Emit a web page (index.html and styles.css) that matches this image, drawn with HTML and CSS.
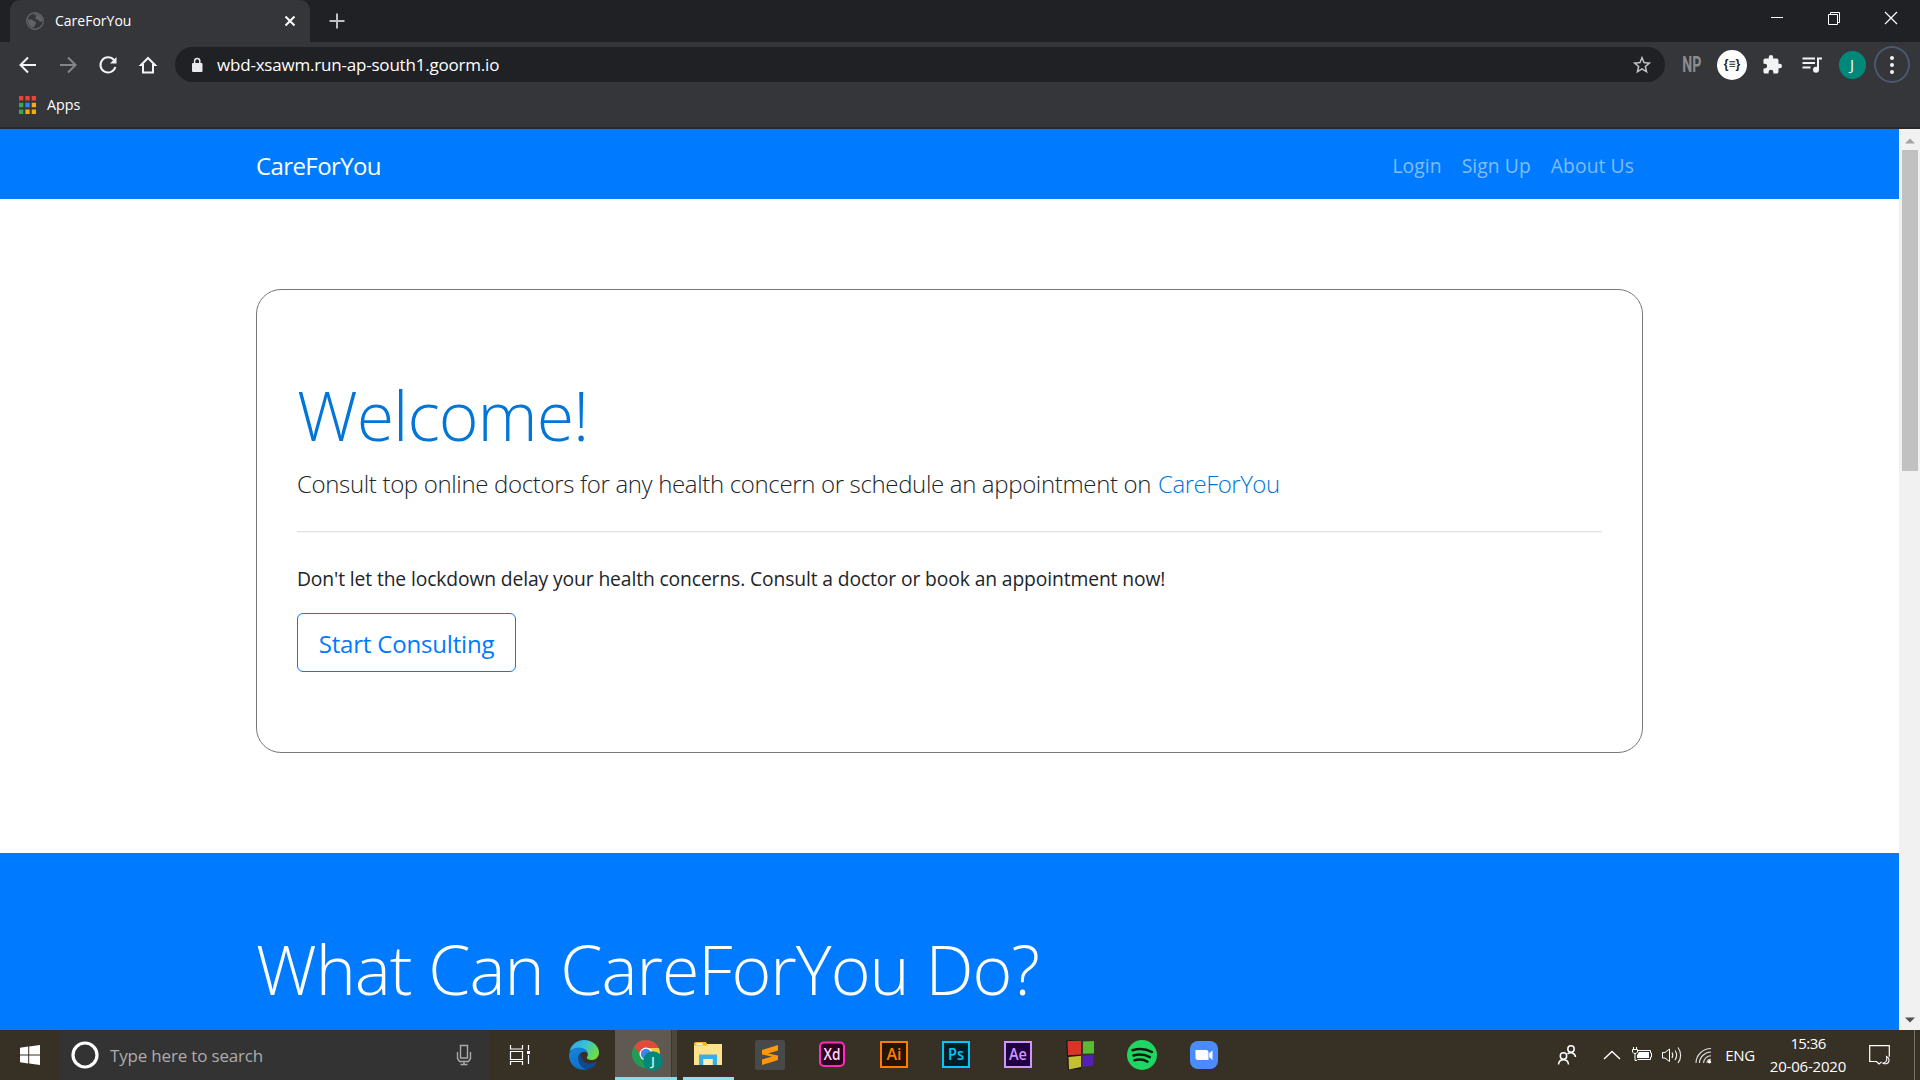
FILE: index.html
```html
<!DOCTYPE html>
<html lang="en">
<head>
<meta charset="utf-8">
<title>CareForYou</title>
<link rel="stylesheet" href="styles.css">
</head>
<body>
<header class="tabstrip">
  <div class="tab">
    <svg width="18" height="18" viewBox="0 0 18 18"><circle cx="9" cy="9" r="8.300" fill="#35363a" stroke="#5f6368" stroke-width="1.400"/><path d="M2 7.500c2.500-.5 4 0 5 1s2.500.8 3 1.800c.5 1.200-1 1.700-1 3 0 1.700-1.500 2.200-2.500 2.200C3.500 14.500 1.500 11 2 7.500zM7 2c3-.9 6 .2 7.500 2 1.200 1.400 2 3 1.800 5-1-.2-1.300 1-2.300.8-1.200-.2-.8-2-2-2.200-1.500-.2-2.500-.4-2.700-1.600-.2-1.300 1.200-1.200 1.200-2.200C10.500 2.800 8 3.500 7 2z" fill="#5f6368"/></svg>
    <span class="tab-title">CareForYou</span>
    <svg width="12" height="12" viewBox="0 0 12 12"><path d="M1.500 1.500l9 9M10.500 1.500l-9 9" stroke="#fff" stroke-width="2"/></svg>
  </div>
  <svg class="new-tab" width="16" height="16" viewBox="0 0 16 16"><path d="M8 .5v15M.5 8h15" stroke="#bdc1c6" stroke-width="2"/></svg>
  <div class="window-buttons">
    <svg width="14" height="14" viewBox="0 0 14 14"><path d="M1 6.500h12" stroke="#fff"/></svg>
    <svg width="14" height="14" viewBox="0 0 14 14"><path d="M1.500 3.500h9v10h-9zM3.500 3.500v-2h9v10h-2" fill="none" stroke="#fff"/></svg>
    <svg width="14" height="14" viewBox="0 0 14 14"><path d="M1 1l12 12M13 1L1 13" stroke="#fff" stroke-width="1.200"/></svg>
  </div>
</header>
<div class="toolbar">
  <div class="nav-buttons">
    <svg width="20" height="20" viewBox="0 0 20 20"><path d="M18 10H3M10 2.500L2.500 10l7.500 7.500" fill="none" stroke="#f1f3f4" stroke-width="2"/></svg>
    <svg width="20" height="20" viewBox="0 0 20 20"><path d="M2 10h15M10 2.500l7.500 7.500-7.500 7.500" fill="none" stroke="#85868a" stroke-width="2"/></svg>
    <svg width="20" height="20" viewBox="0 0 20 20"><path d="M16 5.200A7.600 7.600 0 1 0 17.400 12" fill="none" stroke="#f1f3f4" stroke-width="2"/><path d="M18.500 2v6.500H12z" fill="#f1f3f4"/></svg>
    <svg width="20" height="20" viewBox="0 0 20 20"><path d="M10 3L3 10h2v7.500h10V10h2z" fill="none" stroke="#f1f3f4" stroke-width="2"/></svg>
  </div>
  <div class="omnibox">
    <svg width="12" height="16" viewBox="0 0 12 16"><rect x="1" y="6" width="10.500" height="9" rx="1" fill="#e8eaed"/><path d="M3.600 7V4a2.600 2.600 0 0 1 5.200 0v3" fill="none" stroke="#e8eaed" stroke-width="1.500"/></svg>
    <span class="url">wbd-xsawm.run-ap-south1.goorm.io</span>
    <svg class="star" width="22" height="22" viewBox="0 0 24 24"><path fill="#c4c7ca" d="M22 9.240l-7.190-.620L12 2 9.190 8.630 2 9.240l5.460 4.730L5.820 21 12 17.270 18.180 21l-1.630-7.030L22 9.240zM12 15.400l-3.760 2.270 1-4.280-3.320-2.880 4.380-.380L12 6.100l1.710 4.040 4.380.380-3.320 2.880 1 4.280L12 15.400z"/></svg>
  </div>
  <div class="extensions">
    <div class="ext"><span class="ext-np">NP</span></div>
    <div class="ext"><span class="ext-json">{≡}</span></div>
    <div class="ext"><svg width="19" height="19" viewBox="1.500 1 21.500 21.500"><path fill="#f1f3f4" d="M20.500 11H19V7c0-1.100-.9-2-2-2h-4V3.500a2.500 2.500 0 0 0-5 0V5H4c-1.100 0-1.990.9-1.990 2v3.800H3.500a2.700 2.700 0 0 1 0 5.400H2V20c0 1.100.9 2 2 2h3.800v-1.500a2.700 2.700 0 0 1 5.400 0V22H17c1.100 0 2-.9 2-2v-4h1.500a2.500 2.500 0 0 0 0-5z"/></svg></div>
    <div class="ext"><svg width="20" height="18" viewBox="0 0 20 18"><path d="M.5 2.500h12.500M.5 7h12.500M.5 11.500h8" stroke="#f1f3f4" stroke-width="2"/><path d="M16 13.500V2.500h4" fill="none" stroke="#f1f3f4" stroke-width="2"/><circle cx="14" cy="13.800" r="3" fill="#f1f3f4"/></svg></div>
    <div class="ext"><span class="avatar">J</span></div>
    <div class="ext"><span class="menu"><i></i><i></i><i></i></span></div>
  </div>
</div>
<div class="bookmarks">
  <svg width="17" height="18" viewBox="0 0 17 18"><path fill="#ea4335" d="M0 0h4.300v4.500H0zM6.350 0h4.300v4.500h-4.300zM12.700 0H17v4.500h-4.300z"/><path fill="#34a853" d="M0 6.750h4.300v4.500H0zM0 13.500h4.300V18H0z"/><path fill="#2a8af4" d="M6.350 6.750h4.300v4.500h-4.300z"/><path fill="#fbab05" d="M12.700 6.750H17v4.500h-4.300zM6.350 13.500h4.300V18h-4.300zM12.700 13.500H17V18h-4.300z"/></svg>
  <span>Apps</span>
</div>
<div class="viewport">
  <main class="page">
    <nav class="navbar">
      <span class="brand">CareForYou</span>
      <div class="links"><span>Login</span><span>Sign Up</span><span>About Us</span></div>
    </nav>
    <section class="welcome-card">
      <h1>Welcome!</h1>
      <p class="lead">Consult top online doctors for any health concern or schedule an appointment on <span class="name">CareForYou</span></p>
      <hr>
      <p class="note">Don't let the lockdown delay your health concerns. Consult a doctor or book an appointment now!</p>
      <button class="start">Start Consulting</button>
    </section>
    <section class="features"><h2>What Can CareForYou Do?</h2></section>
  </main>
  <div class="scrollbar">
    <svg width="10" height="6" viewBox="0 0 10 6"><path d="M0 5.500L5 .5l5 5z" fill="#a3a3a3"/></svg>
    <div class="thumb"></div>
    <svg class="down" width="10" height="6" viewBox="0 0 10 6"><path d="M0 .5l5 5 5-5z" fill="#505050"/></svg>
  </div>
</div>
<footer class="taskbar">
  <div class="start-menu"><svg width="20" height="20" viewBox="0 0 20 20"><path fill="#fff" d="M0 2.700l8.200-1.100v7.900H0zM9.200 1.400L20 0v9.500H9.200zM0 10.500h8.200v7.900L0 17.300zM9.200 10.500H20V20L9.200 18.600z"/></svg></div>
  <div class="search">
    <svg width="28" height="28" viewBox="0 0 28 28"><circle cx="14" cy="14" r="12" fill="none" stroke="#fff" stroke-width="3.200"/></svg>
    <span>Type here to search</span>
    <svg class="mic" width="16" height="22" viewBox="0 0 16 22"><path d="M4.500 1.500h7v12.500h-7zM1.500 8v6.500l2 3h9l2-3V8M8 17.500V20M4.500 20.500h7" fill="none" stroke="#aaa" stroke-width="1.400"/></svg>
  </div>
  <div class="app task-view"><svg width="22" height="22" viewBox="0 0 22 22"><path d="M1.500 1v4h12V1M1.500 7.500h12v8h-12zM1.500 21v-3.500h12V21M19.500 1v5M19.500 11v9" fill="none" stroke="#fff" stroke-width="1.200"/><path d="M18 7h3v3h-3z" fill="#fff"/></svg></div>
  <div class="app"><svg width="30" height="30" viewBox="0 0 30 30">
    <defs>
      <linearGradient id="edge-top" x1="0" y1="0" x2="1" y2=".5"><stop offset="0" stop-color="#2aa5dc"/><stop offset=".5" stop-color="#35c1dc"/><stop offset="1" stop-color="#6fdc44"/></linearGradient>
      <linearGradient id="edge-left" x1="0" y1="0" x2=".6" y2="1"><stop offset="0" stop-color="#1a86d8"/><stop offset="1" stop-color="#0b6fd0"/></linearGradient>
    </defs>
    <path d="M.5 12C1.500 5 7.500 0 15 0c8.500 0 15 6 15 12.500 0 5-3.800 7.500-7.500 7.500-3 0-4.700-1-4.700-2.200 0-.9 1-1.300 1-3.300C18.800 10.500 15 8 10.500 8 6 8 2 9.500.5 12z" fill="url(#edge-top)"/>
    <path d="M0 15C.3 10.500 5 7.500 10 7.500c5 0 8.700 3 8.800 6.500-1-1.800-3-2.500-5-2-4 1-5.500 5.500-4 9.500 1.200 3.500 4 6.500 8 8.200C7.500 31 0 24.500 0 15z" fill="url(#edge-left)"/>
    <path d="M11 14c-3.500 4.500-1.500 11.500 6.500 15.700 4.500-.7 8-3.500 10-6.700.4-.7-.1-1.200-.8-.9C20 25.500 12 22 12 16c0-1-.5-1.500-1-2z" fill="#0e4a94"/>
  </svg></div>
  <div class="app active"><svg width="32" height="32" viewBox="0 0 32 32">
    <circle cx="15" cy="15" r="14" fill="#1e9e55"/>
    <path d="M15 15h-6L2.900 8A14 14 0 0 1 27.700 9H15z" fill="#df4a3d"/>
    <path d="M15 9h12.700A14 14 0 0 1 15 29l6-11z" fill="#fdcb3f"/>
    <circle cx="15" cy="15" r="6.500" fill="#fff"/><circle cx="15" cy="15" r="5.200" fill="#4380ee"/>
    <circle cx="22" cy="22" r="9.800" fill="#00877a"/>
    <text x="22" y="26.500" class="chrome-initial">J</text>
  </svg></div>
  <div class="app open"><svg width="28" height="24" viewBox="0 0 28 24"><path d="M0 1.500L1.500 0h10L13 2h15v21H0z" fill="#ffe28c"/><path d="M0 1.500L1.500 0h10L13 2v1.500H0z" fill="#f3b913"/><path d="M2.500 1.200h6v1.600h-6z" fill="#fff"/><path d="M5 23V12.500h18V23h-4.500v-6H9.500v6z" fill="#39aee6"/><path d="M9.500 17h9v6h-9z" fill="#fff0b5"/></svg></div>
  <div class="app"><svg width="30" height="30" viewBox="0 0 30 30"><rect width="30" height="30" rx="2" fill="#494949"/><path d="M7 10l16-5v5.500L13 13.500l10 2V20L7 25v-5.500l10-3-10-2z" fill="#ff9800"/></svg></div>
  <div class="app"><svg class="adobe" width="28" height="28" viewBox="0 0 28 28"><rect x="2" y="1.500" width="24" height="23.500" rx="4" fill="#2e001e" stroke="#ff2bc2" stroke-width="2"/><text x="14" y="18.500" fill="#ffd9f4" textLength="17" lengthAdjust="spacingAndGlyphs">Xd</text></svg></div>
  <div class="app"><svg class="adobe" width="28" height="28" viewBox="0 0 28 28"><rect x="1" y="1" width="26" height="25" fill="#261300" stroke="#ff7c00" stroke-width="2"/><text x="14" y="18.500" fill="#ff7c00" textLength="15" lengthAdjust="spacingAndGlyphs">Ai</text></svg></div>
  <div class="app"><svg class="adobe" width="28" height="28" viewBox="0 0 28 28"><rect x="1" y="1" width="26" height="25" fill="#001d26" stroke="#00c8ff" stroke-width="2"/><text x="14" y="18.500" fill="#00c8ff" textLength="16" lengthAdjust="spacingAndGlyphs">Ps</text></svg></div>
  <div class="app"><svg class="adobe" width="28" height="28" viewBox="0 0 28 28"><rect x="1" y="1" width="26" height="25" fill="#1f0040" stroke="#cf96fd" stroke-width="2"/><text x="14" y="18.500" fill="#cf96fd" textLength="18" lengthAdjust="spacingAndGlyphs">Ae</text></svg></div>
  <div class="app"><svg width="28" height="30" viewBox="0 0 28 30">
    <path d="M0 1l2-1 13 1v28L2 30z" fill="#1b1712"/>
    <path d="M1.500 1H15v13.500l-13 .8z" fill="#d8342a"/><path d="M17 1.500l11-.5v12.500l-11 .3z" fill="#54bd30"/><path d="M2.500 17l12.500-1.200V27L3 29.500z" fill="#c5c02f"/><path d="M16.500 15.500L27.500 15v10.500L16.500 27z" fill="#5620b4"/>
  </svg></div>
  <div class="app"><svg width="30" height="30" viewBox="0 0 30 30"><circle cx="15" cy="15" r="15" fill="#1fd662"/><path d="M5.500 10.200c6-1.800 14-1.200 19.500 1.800M6.500 15.500c5.500-1.500 11.500-1 16.300 1.700M7.500 20.200c4.500-1.200 9.500-.7 13 1.500" fill="none" stroke="#15170f" stroke-width="2.500" stroke-linecap="round"/></svg></div>
  <div class="app"><svg width="28" height="28" viewBox="0 0 28 28"><rect width="28" height="28" rx="8" fill="#4a8cff"/><path d="M5.500 9H16a2.500 2.500 0 0 1 2.500 2.500V19H8a2.500 2.500 0 0 1-2.500-2.500zM19.200 12.300L22.500 9.500v9.500l-3.300-2.800z" fill="#fff"/></svg></div>
  <div class="tray">
    <div class="tray-people"><svg width="20" height="20" viewBox="0 0 20 20"><g fill="none" stroke="#fff" stroke-width="1.500"><circle cx="6.500" cy="11" r="3.200"/><path d="M1.500 19.500c.3-3 2.500-4.800 5-4.800s4.700 1.800 5 4.800"/><circle cx="14" cy="4" r="3.200"/><path d="M10.500 8.800C13.500 6.500 18 8 18.500 12"/></g></svg></div>
    <div class="tray-icon"><svg width="18" height="10" viewBox="0 0 18 10"><path d="M1 9l8-7.500L17 9" fill="none" stroke="#fff" stroke-width="1.400"/></svg></div>
    <div class="tray-icon"><svg width="20" height="16" viewBox="0 0 20 16"><path d="M6 3.500h12.500v2.500h1v4h-1v2.500h-13" fill="none" stroke="#fff"/><path d="M7 5h10v6H5V8z" fill="#fff"/><path d="M1.500 0v2.500M4.500 0v2.500M.5 2.500h5v2.500L4 6.500H2L.5 5zM3 6.500v7h2" fill="none" stroke="#fff"/></svg></div>
    <div class="tray-icon"><svg width="20" height="18" viewBox="0 0 20 18"><path d="M.5 6.500H3L7.500 3v12.500L3 12H.5z" fill="none" stroke="#fff"/><path d="M10 6.500c1 1.500 1 3.500 0 5.500M13 4.500c2 2.800 2 6.500 0 9.500M16 1.500c3.500 4.500 3.500 11 0 15.500" fill="none" stroke="#eee" stroke-width="1.100"/></svg></div>
    <div class="tray-wifi"><svg width="17" height="17" viewBox="0 0 17 17"><path d="M1 16C1 8 8 1.500 16 1.500M4.500 16C4.500 10 10 5 16 5M8.500 16C8.500 12 12 8.700 16 8.700M12 16c0-2.200 1.800-3.800 4-3.800" fill="none" stroke="#ddd" stroke-width="1.100"/><circle cx="14.500" cy="14.800" r="1.700" fill="#fff"/></svg></div>
    <div class="tray-lang">ENG</div>
    <div class="tray-clock"><span class="time">15:36</span><span>20-06-2020</span></div>
    <div class="tray-notify"><svg width="21" height="20" viewBox="0 0 21 20"><path d="M12.500 17L10 19l-2.500-2.500H.7V.7h19.600v11" fill="none" stroke="#fff" stroke-width="1.200"/><path d="M17.500 11.500c2 1 3 3 2.300 5-.8 2.300-3.500 3-6.300 1.500 3 .2 5-2 4-6.500z" fill="none" stroke="#fff" stroke-width="1.100"/></svg></div>
    <div class="show-desktop"></div>
  </div>
</footer>
</body>
</html>
```
FILE: styles.css
```css
* { box-sizing: border-box; }
body {
  margin: 0;
  width: 1920px;
  height: 1080px;
  overflow: hidden;
  display: flex;
  flex-direction: column;
  font-family: "Open Sans", "Noto Sans", sans-serif;
  background: #35363a;
  color: #212529;
  white-space: nowrap;
}
svg { display: block; flex: none; }

/* Browser chrome */
.tabstrip { height: 42px; background: #202124; display: flex; align-items: center; padding-left: 10px; }
.tab { width: 300px; height: 42px; background: #35363a; border-radius: 10px 10px 0 0; display: flex; align-items: center; padding: 0 14px 0 16px; color: #fff; }
.tab-title { font-size: 14px; line-height: 20px; margin-left: 11px; padding-bottom: 1px; flex: 1; }
.new-tab { margin-left: 19px; }
.window-buttons { margin-left: auto; display: flex; gap: 43px; padding: 0 22px 6px 0; }

.toolbar { height: 45px; display: flex; align-items: center; padding-left: 18px; }
.nav-buttons { display: flex; gap: 20px; margin-right: 17px; }
.omnibox { width: 1490px; height: 35px; border-radius: 18px; background: #202124; display: flex; align-items: center; padding: 0 12px 0 16px; color: #fff; }
.url { font-size: 17px; letter-spacing: -.2px; line-height: 24px; margin-left: 14px; padding-top: 1px; }
.star { margin-left: auto; }
.extensions { display: flex; align-items: center; margin-left: 7px; color: #fff; }
.ext { width: 40px; display: flex; justify-content: center; align-items: center; }
.ext-np { font: 700 22px/26px Roboto, sans-serif; color: #8c8c8d; transform: scaleX(.64); }
.ext-json { width: 30px; height: 30px; border-radius: 50%; background: #fff; color: #222; font: bold 12px/29px "Liberation Sans", sans-serif; text-align: center; }
.avatar { width: 27px; height: 28px; border-radius: 50%; background: #00897b; font-size: 15px; line-height: 26px; text-align: center; }
.menu { width: 36px; height: 37px; border: 2px solid #4b5972; border-radius: 50%; display: flex; flex-direction: column; align-items: center; justify-content: center; gap: 3px; }
.menu i { width: 4px; height: 4px; border-radius: 50%; background: #f1f3f4; }

.bookmarks { height: 42px; border-bottom: 2px solid #28292c; display: flex; align-items: center; gap: 11px; padding: 0 19px 5px; color: #fff; font-size: 14.300px; }

/* Web page */
.viewport { height: 901px; display: flex; background: #fff; }
.page { width: 1899px; height: 901px; overflow: hidden; display: flex; flex-direction: column; }
.navbar { height: 70px; flex: none; background: #007bff; color: #fff; display: flex; justify-content: space-between; align-items: center; padding: 0 265px 0 256px; }
.brand { font-size: 24px; letter-spacing: -.6px; padding-top: 3px; }
.links { display: flex; gap: 20px; font-size: 19.300px; letter-spacing: .08px; color: #80bdff; padding-top: 2px; }
.welcome-card { flex: none; margin: 90px 256px 0; height: 464px; border: 1px solid #777; border-radius: 25px; padding: 83px 40px 0; }
h1, h2 { font-size: 68px; font-weight: 300; line-height: 84px; letter-spacing: -1px; margin: 0; }
h1 { color: #0275d8; }
.lead { margin: 9px 0 0; font-size: 24px; font-weight: 300; line-height: 36px; letter-spacing: -.34px; }
.name { color: #0275d8; letter-spacing: -.5px; padding-left: 1px; }
hr { margin: 29px 0 0; border: 0; border-top: 1px solid #e2e2e2; box-shadow: 0 1px #f6f6f6; }
.note { margin: 32px 0 0; font-size: 19.300px; line-height: 30px; letter-spacing: -.12px; }
.start { display: block; margin-top: 19px; width: 219px; height: 59px; padding: 1px 0 0; border: 1px solid #007bff; border-radius: 6px; background: #fff; color: #007bff; font: 24px "Open Sans", sans-serif; letter-spacing: -.18px; }
.features { flex: 1; margin-top: 100px; background: #007bff; color: #fff; padding: 74px 256px 0; }

.scrollbar { width: 21px; background: #f1f1f1; display: flex; flex-direction: column; align-items: center; padding: 9px 0 7px; }
.thumb { width: 16px; height: 321px; margin-top: 6px; background: #c1c1c1; }
.down { margin-top: auto; }

/* Windows taskbar */
.taskbar { height: 50px; background: #373024; display: flex; color: #fff; }
.start-menu { width: 60px; display: flex; align-items: center; justify-content: center; }
.search { width: 430px; background: #333; display: flex; align-items: center; padding: 0 18px 0 11px; }
.search span { margin-left: 11px; font-size: 17px; letter-spacing: -.18px; color: #acacac; }
.mic { margin-left: auto; }
.app { width: 62px; display: flex; align-items: center; justify-content: center; }
.task-view { width: 63px; padding-right: 3px; }
.active { background: linear-gradient(90deg, #5f5952 0 56px, #3b352c 56px 57px, #4e473d 57px); border-bottom: 3px solid #84dfe8; padding: 3px 0 0 1px; }
.open { background: linear-gradient(#8ee0ea, #8ee0ea) 50% 100% / 51px 3px no-repeat; padding-bottom: 2px; }
.chrome-initial { font: 600 13px "Open Sans", sans-serif; fill: #d5ece9; text-anchor: middle; }
.adobe text { font: 600 16px "Open Sans", sans-serif; text-anchor: middle; }
.tray { margin-left: auto; display: flex; align-items: stretch; font-size: 15px; }
.tray > div { display: flex; align-items: center; justify-content: center; }
.tray-people { width: 60px; }
.tray .tray-icon { width: 30px; }
.tray-wifi { width: 32px; }
.tray-lang { width: 42px; letter-spacing: -.4px; }
.tray .tray-clock { width: 94px; flex-direction: column; line-height: 23px; letter-spacing: -.2px; }
.time { letter-spacing: -.6px; }
.tray-notify { width: 48px; }
.show-desktop { width: 6px; margin-left: 11px; border-left: 1px solid #77726a; }
```
